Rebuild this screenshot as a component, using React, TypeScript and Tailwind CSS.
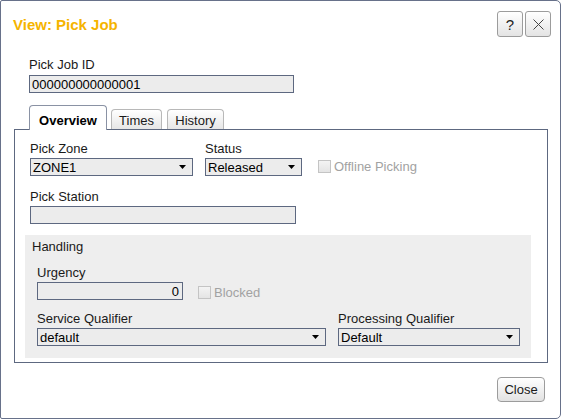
import React from "react";

const font = { fontFamily: '"Liberation Sans", Arial, sans-serif' };

function Arrow() {
  return (
    <svg width="7" height="4" viewBox="0 0 7 4" className="shrink-0">
      <path d="M0 0H7L3.5 4Z" fill="#000" />
    </svg>
  );
}

function Label({ children, className = "" }: { children: React.ReactNode; className?: string }) {
  return <div className={`h-[15px] text-[13px] leading-[15px] text-[#1a1a1a] ${className}`}>{children}</div>;
}

function Select({ value, width, className = "" }: { value: string; width: number; className?: string }) {
  return (
    <div
      className={`flex h-[18px] items-center justify-between border border-[#5d6880] bg-[#ececec] pl-[2px] pr-[6px] text-[13px] leading-[15px] text-black ${className}`}
      style={{ width }}
    >
      <span>{value}</span>
      <Arrow />
    </div>
  );
}

function Field({ value = "", width, right, className = "" }: { value?: string; width: number; right?: boolean; className?: string }) {
  return (
    <div
      className={`flex h-[18px] items-center border border-[#5d6880] bg-[#ececec] px-[2px] text-[13px] leading-[15px] text-black ${right ? "justify-end pr-[3px]" : ""} ${className}`}
      style={{ width }}
    >
      {value}
    </div>
  );
}

function Check({ label, className = "" }: { label: string; className?: string }) {
  return (
    <div className={`flex items-center gap-[3px] text-[13px] leading-[15px] text-[#a2a2a2] ${className}`}>
      <span className="h-[13px] w-[13px] border border-[#c4c4c4] bg-gradient-to-b from-[#f4f4f4] to-[#e4e4e4]" />
      <span>{label}</span>
    </div>
  );
}

function IconButton({ children, className = "" }: { children: React.ReactNode; className?: string }) {
  return (
    <div
      className={`flex h-[26px] w-[26px] items-center justify-center rounded-[3px] border border-[#9c9c9c] bg-gradient-to-b from-white to-[#e4e4e4] ${className}`}
    >
      {children}
    </div>
  );
}

export default function App() {
  return (
    <div style={font} className="flex h-[419px] w-[561px] flex-col rounded-[5px] rounded-tl-[2px] rounded-bl-[2px] border border-[#67718a] bg-white">
      {/* header */}
      <div className="flex items-start justify-between pl-[12px] pr-[9px] pt-[10px]">
        <h1 className="mt-[5px] text-[15px] font-bold leading-[17px] text-[#f5b400]">View: Pick Job</h1>
        <div className="flex gap-[2px]">
          <IconButton>
            <span className="text-[15px] leading-none text-[#222]">?</span>
          </IconButton>
          <IconButton>
            <svg width="11" height="11" viewBox="0 0 11 11">
              <path d="M0.5 0.5L10.5 10.5M10.5 0.5L0.5 10.5" stroke="#444" strokeWidth="1" />
            </svg>
          </IconButton>
        </div>
      </div>

      {/* id */}
      <div className="mt-[20px] pl-[28px]">
        <Label>Pick Job ID</Label>
        <Field value="000000000000001" width={265} className="mt-[3px]" />
      </div>

      {/* tabs */}
      <div className="relative z-10 mt-[12px] flex h-[25px] items-end pl-[28px] text-[13px] leading-[15px]">
        <div className="h-[25px] w-[78px] rounded-t-[4px] border border-b-0 border-[#8a92a4] bg-white pt-[7px] text-center font-bold text-black">
          Overview
        </div>
        <div className="mb-px ml-[4px] h-[20px] w-[51px] rounded-t-[4px] border border-b-0 border-[#b8b8b8] bg-gradient-to-b from-white to-[#e6e6e6] pt-[3px] text-center text-[#1a1a1a]">
          Times
        </div>
        <div className="mb-px ml-[5px] h-[20px] w-[57px] rounded-t-[4px] border border-b-0 border-[#b8b8b8] bg-gradient-to-b from-white to-[#e6e6e6] pt-[3px] text-center text-[#1a1a1a]">
          History
        </div>
      </div>

      {/* panel */}
      <div className="-mt-px ml-[13px] h-[234px] w-[534px] border border-[#5d6880] pl-[15px] pt-[11px]">
        <div className="flex items-end">
          <div>
            <Label>Pick Zone</Label>
            <Select value="ZONE1" width={163} className="mt-[2px]" />
          </div>
          <div className="ml-[12px]">
            <Label>Status</Label>
            <Select value="Released" width={97} className="mt-[2px]" />
          </div>
          <Check label="Offline Picking" className="mb-[2px] ml-[16px]" />
        </div>

        <div className="mt-[13px]">
          <Label>Pick Station</Label>
          <Field width={266} className="mt-[2px]" />
        </div>

        <div className="ml-[-5px] mt-[11px] w-[506px] bg-[#eeeeee] pb-[12px] pl-[7px] pt-[4px]">
          <Label>Handling</Label>
          <div className="ml-[5px]">
            <Label className="mt-[11px]">Urgency</Label>
            <div className="mt-[2px] flex items-center">
              <Field value="0" right width={146} />
              <Check label="Blocked" className="ml-[15px] mt-[2px]" />
            </div>
            <div className="mt-[11px] flex">
              <div>
                <Label>Service Qualifier</Label>
                <Select value="default" width={289} className="mt-[2px]" />
              </div>
              <div className="ml-[12px]">
                <Label>Processing Qualifier</Label>
                <Select value="Default" width={182} className="mt-[2px]" />
              </div>
            </div>
          </div>
        </div>
      </div>

      {/* footer */}
      <div className="mr-[15px] mt-[14px] flex justify-end">
        <div className="flex h-[25px] w-[48px] items-center justify-center rounded-[4px] border border-[#9c9c9c] bg-gradient-to-b from-white to-[#e2e2e2] text-[13px] text-[#1a1a1a]">
          Close
        </div>
      </div>
    </div>
  );
}
